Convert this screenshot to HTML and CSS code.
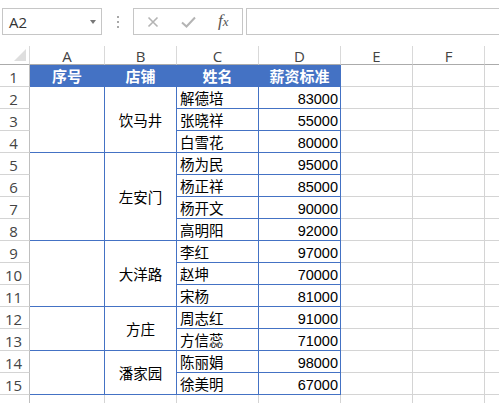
FILE: index.html
```html
<!DOCTYPE html>
<html>
<head>
<meta charset="utf-8">
<link rel="stylesheet" href="styles.css">
</head>
<body>
<div class="toolbar">
  <div class="namebox"><span class="ref">A2</span><span class="caret"></span></div>
  <div class="dots"><i></i><i></i><i></i></div>
  <div class="btns">
    <svg class="ico" width="12" height="12" viewBox="0 0 12 12"><path d="M1.5 1.5 L10.5 10.5 M10.5 1.5 L1.5 10.5" stroke="#b4b4b4" stroke-width="1.6" fill="none"/></svg>
    <svg class="ico ok" width="15" height="12" viewBox="0 0 15 12"><path d="M1 6.5 L5.5 10.5 L14 1.5" stroke="#b4b4b4" stroke-width="2" fill="none"/></svg>
    <span class="fx">f<small>x</small></span>
  </div>
  <div class="formula"></div>
</div>
<div class="sheet">
  <div class="corner"><svg width="12" height="12" viewBox="0 0 12 12"><polygon points="12,0 12,12 0,12" fill="#dedede"/></svg></div>
  <div class="col">A</div><div class="col">B</div><div class="col">C</div><div class="col">D</div><div class="col">E</div><div class="col">F</div><div class="col"></div>

  <div class="r">1</div>
  <div class="t h">序号</div><div class="t h">店铺</div><div class="t h">姓名</div><div class="t h">薪资标准</div>
  <div class="c"></div><div class="c"></div><div class="c"></div>

  <div class="r">2</div>
  <div class="t s3"></div><div class="t m s3">饮马井</div><div class="t nm">解德培</div><div class="t n">83000</div>
  <div class="c"></div><div class="c"></div><div class="c"></div>
  <div class="r">3</div>
  <div class="t nm">张晓祥</div><div class="t n">55000</div>
  <div class="c"></div><div class="c"></div><div class="c"></div>
  <div class="r">4</div>
  <div class="t nm">白雪花</div><div class="t n">80000</div>
  <div class="c"></div><div class="c"></div><div class="c"></div>

  <div class="r">5</div>
  <div class="t s4"></div><div class="t m s4">左安门</div><div class="t nm">杨为民</div><div class="t n">95000</div>
  <div class="c"></div><div class="c"></div><div class="c"></div>
  <div class="r">6</div>
  <div class="t nm">杨正祥</div><div class="t n">85000</div>
  <div class="c"></div><div class="c"></div><div class="c"></div>
  <div class="r">7</div>
  <div class="t nm">杨开文</div><div class="t n">90000</div>
  <div class="c"></div><div class="c"></div><div class="c"></div>
  <div class="r">8</div>
  <div class="t nm">高明阳</div><div class="t n">92000</div>
  <div class="c"></div><div class="c"></div><div class="c"></div>

  <div class="r">9</div>
  <div class="t s3"></div><div class="t m s3">大洋路</div><div class="t nm">李红</div><div class="t n">97000</div>
  <div class="c"></div><div class="c"></div><div class="c"></div>
  <div class="r">10</div>
  <div class="t nm">赵坤</div><div class="t n">70000</div>
  <div class="c"></div><div class="c"></div><div class="c"></div>
  <div class="r">11</div>
  <div class="t nm">宋杨</div><div class="t n">81000</div>
  <div class="c"></div><div class="c"></div><div class="c"></div>

  <div class="r">12</div>
  <div class="t s2"></div><div class="t m s2">方庄</div><div class="t nm">周志红</div><div class="t n">91000</div>
  <div class="c"></div><div class="c"></div><div class="c"></div>
  <div class="r">13</div>
  <div class="t nm">方信蕊</div><div class="t n">71000</div>
  <div class="c"></div><div class="c"></div><div class="c"></div>

  <div class="r">14</div>
  <div class="t s2"></div><div class="t m s2">潘家园</div><div class="t nm">陈丽娟</div><div class="t n">98000</div>
  <div class="c"></div><div class="c"></div><div class="c"></div>
  <div class="r">15</div>
  <div class="t nm">徐美明</div><div class="t n">67000</div>
  <div class="c"></div><div class="c"></div><div class="c"></div>

  <div class="r"></div>
  <div class="c"></div><div class="c"></div><div class="c"></div><div class="c"></div><div class="c"></div><div class="c"></div><div class="c"></div>
</div>
</body>
</html>
```

FILE: styles.css
```css
* { box-sizing: border-box; }
html, body { margin: 0; padding: 0; background: #fff; }
body {
  width: 499px;
  height: 403px;
  overflow: hidden;
  font-family: "Liberation Sans", "Noto Sans CJK SC", sans-serif;
}

.toolbar {
  height: 46px;
  display: flex;
  align-items: flex-start;
  padding-top: 8px;
  overflow: hidden;
}
.namebox {
  flex: none;
  width: 100px;
  height: 27px;
  margin-left: 2px;
  border: 1px solid #c6c6c6;
  display: flex;
  align-items: center;
  justify-content: space-between;
  padding: 0 5px 0 6px;
}
.ref {
  font-family: "Open Sans", sans-serif;
  font-size: 15px;
  color: #333;
}
.caret {
  width: 0; height: 0;
  border-left: 3.5px solid transparent;
  border-right: 3.5px solid transparent;
  border-top: 4px solid #777;
  margin-top: 1px;
}
.dots {
  flex: none;
  width: 31px;
  height: 27px;
  display: flex;
  flex-direction: column;
  align-items: center;
  justify-content: center;
  gap: 3px;
}
.dots i {
  display: block;
  width: 2px;
  height: 2px;
  background: #a8a8a8;
}
.btns {
  flex: none;
  width: 110px;
  height: 27px;
  border: 1px solid #c6c6c6;
  display: flex;
  align-items: center;
  padding-left: 13px;
}
.ico { display: block; margin-top: 1px; }
.ok { margin-left: 22px; }
.fx {
  font-family: "Liberation Serif", serif;
  font-style: italic;
  font-size: 17px;
  color: #555;
  margin-left: 22px;
  margin-top: -1px;
}
.fx small { font-size: 13px; }
.formula {
  flex: 1;
  height: 27px;
  margin-left: 3px;
  margin-right: -10px;
  border: 1px solid #c6c6c6;
}

.sheet {
  display: grid;
  grid-template-columns: 30px 75px 72px 82px 82px 72px 72px 15px;
  grid-template-rows: 19px repeat(15, 22px) 9px;
  overflow: hidden;
}
.corner {
  border-right: 1px solid #d9d9d9;
  border-bottom: 1px solid #ababab;
  display: flex;
  align-items: flex-end;
  justify-content: flex-end;
  padding: 0 3px 3px 0;
}
.corner svg { display: block; }
.col {
  border-right: 1px solid #d9d9d9;
  border-bottom: 1px solid #ababab;
  font-family: "Open Sans", sans-serif;
  font-size: 15px;
  line-height: 18px;
  color: #444;
  text-align: center;
  padding-top: 1px;
}
.r {
  border-right: 1px solid #bfbfbf;
  border-bottom: 1px solid #d4d4d4;
  font-family: "Open Sans", sans-serif;
  font-size: 15px;
  color: #444;
  display: flex;
  align-items: center;
  justify-content: center;
  padding-top: 3px;
  padding-right: 2px;
}
.c {
  border-right: 1px solid #d4d4d4;
  border-bottom: 1px solid #d4d4d4;
}
.t {
  border-right: 1px solid #4472c4;
  border-bottom: 1px solid #4472c4;
  font-size: 14.5px;
  color: #000;
  display: flex;
  align-items: center;
}
.h {
  background: #4472c4;
  color: #fff;
  font-weight: bold;
  font-size: 15px;
  justify-content: center;
}
.nm { padding-left: 3px; }
.n { justify-content: flex-end; padding-right: 2px; padding-top: 2px; }
.m { justify-content: center; }
.s2 { grid-row: span 2; }
.s3 { grid-row: span 3; }
.s4 { grid-row: span 4; }
```
